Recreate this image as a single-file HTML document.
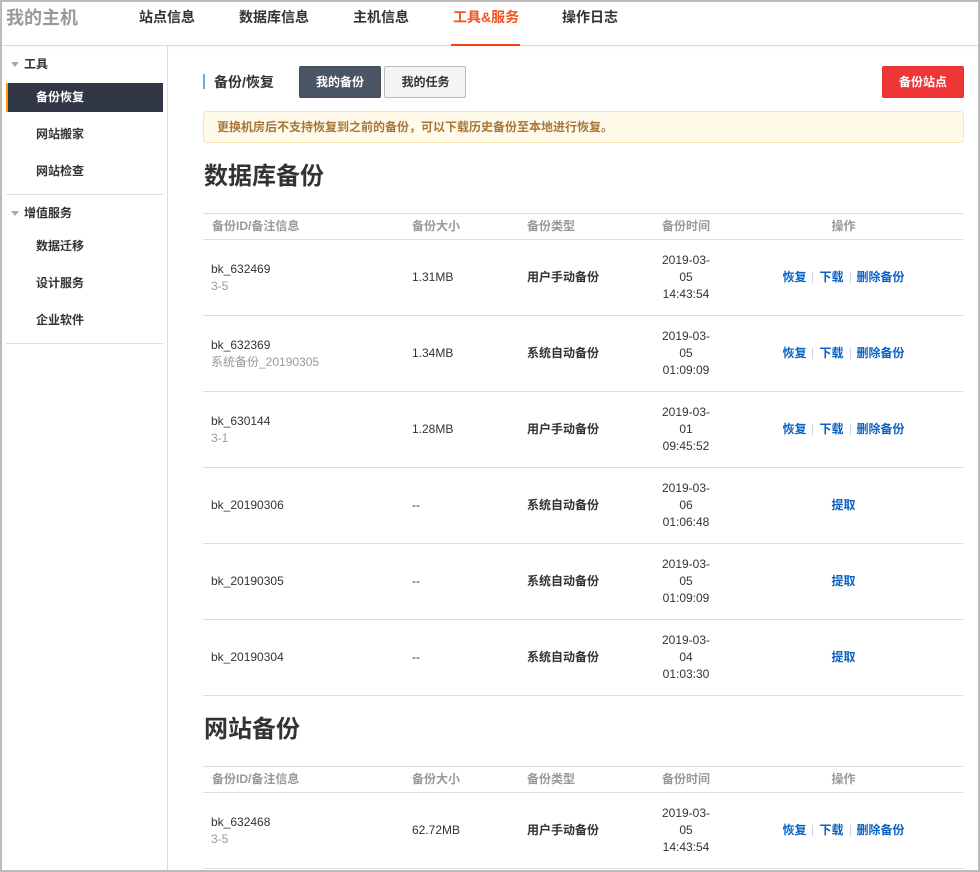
<!DOCTYPE html>
<html lang="zh"><head><meta charset="utf-8"><title>我的主机</title>
<style>
*{box-sizing:border-box;margin:0;padding:0}
html,body{width:980px;height:872px;overflow:hidden;background:#fff}
body{position:relative;font:12px/17px "Liberation Sans","Noto Sans CJK SC",sans-serif;color:#333}
.a{position:absolute;white-space:nowrap}
.b{font-weight:700}
.frame{position:absolute;left:0;top:0;width:980px;height:872px;border:2px solid #bbb;z-index:9;pointer-events:none}
.nav{font-size:14px;font-weight:700;line-height:18px;top:8px;color:#333}
.side{font-size:12px;font-weight:700;left:36px;color:#333}
.hr{position:absolute;background:#ddd;height:1px}
.tri{position:absolute;left:11px;width:0;height:0;border:4px solid transparent;border-top:5px solid #aaa;border-bottom:0}
table{position:absolute;left:203px;width:760px;table-layout:fixed;border-collapse:collapse;border-top:1px solid #ddd}
td,th{border-bottom:1px solid #ddd;vertical-align:middle;text-align:left;padding:0 0 0 8px;font-size:12px;line-height:17px;color:#333;font-weight:400}
th{height:26px;color:#999;font-weight:700;line-height:25px}
td{height:76px}
th:nth-child(1),th:nth-child(2),td:nth-child(2){padding-left:9px}
.t,th.t{text-align:center;padding:0}
.o,th.o{text-align:center;padding:0 0 0 6px}
.ty{font-weight:700;color:#333}
.g{color:#999}
a{color:#0a62c4;font-weight:700;text-decoration:none}
.s{display:inline-block;width:1px;height:11px;background:#c9d6e4;margin:0 6px;vertical-align:-2px}
.h2{position:absolute;left:204px;font-size:24px;line-height:32px;font-weight:700;color:#333}
</style></head><body>
<div class="frame"></div>

<div class="a" style="left:6px;top:7px;font-size:18px;line-height:22px;font-weight:700;color:#999">我的主机</div>
<div class="a nav" style="left:139px">站点信息</div>
<div class="a nav" style="left:239px">数据库信息</div>
<div class="a nav" style="left:353px">主机信息</div>
<div class="a nav" style="left:453px;color:#f4511e">工具&amp;服务</div>
<div class="a nav" style="left:562px">操作日志</div>
<div style="position:absolute;left:2px;top:45px;width:976px;height:1px;background:#ddd;box-shadow:0 1px 3px rgba(0,0,0,.08)"></div>
<div style="position:absolute;left:451px;top:44px;width:69px;height:2px;background:#f4420a"></div>

<div style="position:absolute;left:167px;top:46px;width:1px;height:824px;background:#ddd"></div>
<div class="tri" style="top:62px"></div>
<div class="a b" style="left:24px;top:56px">工具</div>
<div style="position:absolute;left:6px;top:83px;width:157px;height:29px;background:#323745;border-left:2px solid #f90"></div>
<div class="a side" style="top:89px;color:#fff">备份恢复</div>
<div class="a side" style="top:126px">网站搬家</div>
<div class="a side" style="top:163px">网站检查</div>
<div class="hr" style="left:6px;top:194px;width:157px"></div>
<div class="tri" style="top:211px"></div>
<div class="a b" style="left:24px;top:205px">增值服务</div>
<div class="a side" style="top:238px">数据迁移</div>
<div class="a side" style="top:275px">设计服务</div>
<div class="a side" style="top:312px">企业软件</div>
<div class="hr" style="left:6px;top:343px;width:157px"></div>

<div style="position:absolute;left:203px;top:74px;width:2px;height:15px;background:#7aa9d6"></div>
<div class="a b" style="left:214px;top:73px;font-size:14px;line-height:18px">备份/恢复</div>
<div class="a b" style="left:299px;top:66px;width:82px;height:32px;background:#4a5565;border:1px solid #414b5a;border-radius:2px;color:#fff;text-align:center;line-height:30px">我的备份</div>
<div class="a b" style="left:384px;top:66px;width:82px;height:32px;background:#f5f5f5;border:1px solid #bbb;border-radius:2px;color:#333;text-align:center;line-height:30px;padding-left:1px">我的任务</div>
<div class="a b" style="left:882px;top:66px;width:82px;height:32px;background:#ee3636;border:1px solid #e23333;border-radius:2px;color:#fff;text-align:center;line-height:30px">备份站点</div>
<div class="a b" style="left:203px;top:111px;width:761px;height:32px;background:#fffaea;border:1px solid #f9e3b0;border-radius:4px;color:#a8763a;padding-left:13px;line-height:30px">更换机房后不支持恢复到之前的备份，可以下载历史备份至本地进行恢复。</div>

<div class="h2" style="top:161px">数据库备份</div>
<table style="top:213px">
<colgroup><col style="width:200px"><col style="width:116px"><col style="width:135px"><col style="width:64px"><col style="width:245px"></colgroup>
<tr><th>备份ID/备注信息</th><th>备份大小</th><th>备份类型</th><th class="t">备份时间</th><th class="o">操作</th></tr>
<tr><td>bk_632469<br><span class="g">3-5</span></td><td>1.31MB</td><td class="ty">用户手动备份</td><td class="t">2019-03-<br>05<br>14:43:54</td><td class="o"><a>恢复</a><span class="s"></span><a>下载</a><span class="s"></span><a>删除备份</a></td></tr>
<tr><td>bk_632369<br><span class="g">系统备份_20190305</span></td><td>1.34MB</td><td class="ty">系统自动备份</td><td class="t">2019-03-<br>05<br>01:09:09</td><td class="o"><a>恢复</a><span class="s"></span><a>下载</a><span class="s"></span><a>删除备份</a></td></tr>
<tr><td>bk_630144<br><span class="g">3-1</span></td><td>1.28MB</td><td class="ty">用户手动备份</td><td class="t">2019-03-<br>01<br>09:45:52</td><td class="o"><a>恢复</a><span class="s"></span><a>下载</a><span class="s"></span><a>删除备份</a></td></tr>
<tr><td>bk_20190306</td><td>--</td><td class="ty">系统自动备份</td><td class="t">2019-03-<br>06<br>01:06:48</td><td class="o"><a>提取</a></td></tr>
<tr><td>bk_20190305</td><td>--</td><td class="ty">系统自动备份</td><td class="t">2019-03-<br>05<br>01:09:09</td><td class="o"><a>提取</a></td></tr>
<tr><td>bk_20190304</td><td>--</td><td class="ty">系统自动备份</td><td class="t">2019-03-<br>04<br>01:03:30</td><td class="o"><a>提取</a></td></tr>
</table>

<div class="h2" style="top:714px">网站备份</div>
<table style="top:766px">
<colgroup><col style="width:200px"><col style="width:116px"><col style="width:135px"><col style="width:64px"><col style="width:245px"></colgroup>
<tr><th>备份ID/备注信息</th><th>备份大小</th><th>备份类型</th><th class="t">备份时间</th><th class="o">操作</th></tr>
<tr><td>bk_632468<br><span class="g">3-5</span></td><td>62.72MB</td><td class="ty">用户手动备份</td><td class="t">2019-03-<br>05<br>14:43:54</td><td class="o"><a>恢复</a><span class="s"></span><a>下载</a><span class="s"></span><a>删除备份</a></td></tr>
</table>
</body></html>
